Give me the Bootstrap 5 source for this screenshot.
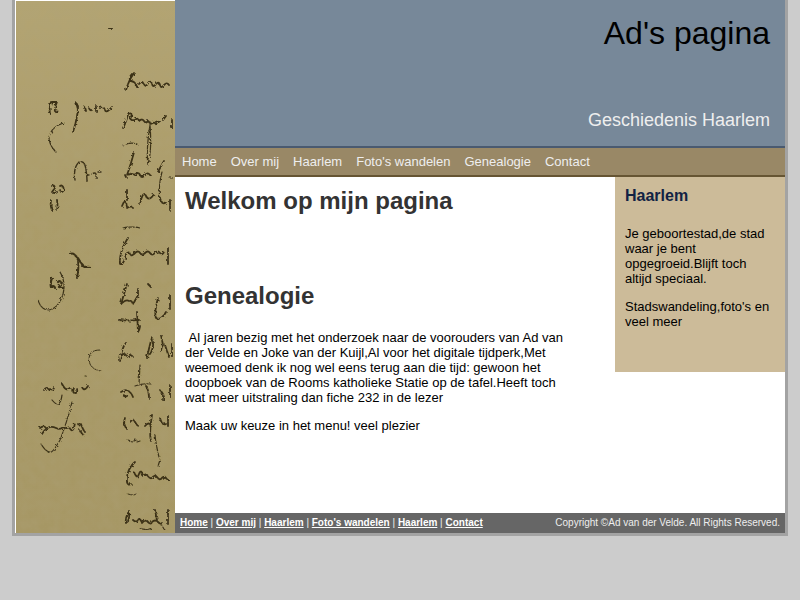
<!DOCTYPE html>
<html lang="nl">
<head>
  <meta charset="UTF-8">
  <title>Ad's pagina</title>
  <link href="https://cdn.jsdelivr.net/npm/bootstrap@5.3.0/dist/css/bootstrap.min.css" rel="stylesheet">
  <style>
    body {
      background-color: #cccccc;
      color: #000;
      font-family: "Liberation Sans", Arial, sans-serif;
      font-size: 13px;
      line-height: 15px;
    }
    #wrap {
      width: 776px;
      height: 536px;
      margin-left: 12px;
      border: 3px solid #a3a3a3;
      border-top: 0;
      background-color: #fff;
    }
    #scan {
      width: 160px;
      flex: none;
      padding: 1px 0 0 1px;
      background-color: #fff;
    }
    #scan svg { display: block; }
    #kop {
      height: 148px;
      background-color: #778899;
      border-bottom: 2px solid #4a5a70;
      padding: 15px 15px 0 0;
      text-align: right;
    }
    #kop h1 {
      font-size: 32px;
      line-height: 37px;
      margin: 0 0 58px;
      color: #000;
      font-weight: 400;
    }
    #kop h2 {
      font-size: 18px;
      line-height: 21px;
      margin: 0;
      color: #eee;
      font-weight: 400;
    }
    #menu {
      height: 29px;
      background-color: #998866;
      border-bottom: 2px solid #665533;
      padding: 6px 7px 0;
      gap: 14px;
    }
    #menu a {
      color: #eee;
      text-decoration: none;
      font-size: 13px;
      line-height: 15px;
    }
    #tekst {
      width: 440px;
      flex: none;
      padding: 10px 0 0 10px;
      height: 336px;
    }
    #tekst h2 {
      color: #333;
      font-size: 24px;
      line-height: 28px;
      font-weight: 700;
      margin: 0;
    }
    #tekst h2.tweede { margin: 67px 0 20px; }
    #tekst p { width: 380px; margin: 0 0 13px; }
    #zij {
      width: 170px;
      height: 195px;
      flex: none;
      background-color: #ccbb99;
      padding: 10px;
    }
    #zij h3 {
      color: #112244;
      font-size: 16px;
      line-height: 18px;
      font-weight: 700;
      margin: 0 0 21px;
    }
    #zij p { margin: 0 0 13px; }
    #voet {
      height: 20px;
      background-color: #666;
      color: #eee;
      font-size: 10px;
      line-height: 13px;
      padding: 3px 5px 0;
    }
    #voet a { color: #fff; font-weight: 700; text-decoration: underline; }
  </style>
</head>
<body>
  <div id="wrap" class="d-flex">
    <div id="scan">
      <svg width="159" height="532" viewBox="16 1 159 532" fill="none" stroke="#3c3218" stroke-linecap="round" stroke-linejoin="round">
        <defs>
          <filter id="korrel" x="0" y="0" width="100%" height="100%">
            <feTurbulence type="fractalNoise" baseFrequency="0.1" numOctaves="3" seed="4"/>
            <feColorMatrix values="0 0 0 0 0.42  0 0 0 0 0.36  0 0 0 0 0.2  0 0 0 0.45 -0.1"/>
          </filter>
          <filter id="zacht" x="0" y="0" width="100%" height="100%">
            <feTurbulence type="fractalNoise" baseFrequency="0.35" numOctaves="2" seed="9" result="ruis"/>
            <feDisplacementMap in="SourceGraphic" in2="ruis" scale="3.5"/>
            <feGaussianBlur stdDeviation="0.7"/>
          </filter>
          <linearGradient id="papier" x1="0" y1="0" x2="0" y2="1">
            <stop offset="0" stop-color="#b3a472"/>
            <stop offset="0.4" stop-color="#ab9c69"/>
            <stop offset="1" stop-color="#a69764"/>
          </linearGradient>
        </defs>
        <rect x="16" y="1" width="159" height="532" fill="url(#papier)" stroke="none"/>
        <rect x="16" y="1" width="159" height="532" filter="url(#korrel)" stroke="none"/>
        <g filter="url(#zacht)" stroke-width="1.8" stroke-dasharray="5 1.2">
          <path d="M110 28h1" stroke-width="4"/>
          <!-- rechterkolom -->
          <path d="M126 90q3-10 8-17M132 74q-4 4-1 7q5 1 6 6M139 84q3-4 5 0t4-1q3-3 4 1t4 0q3-3 4 1t4 0q3-3 5 0"/>
          <path d="M123 128q4-8 5-14q5-2 3 3q-2 4 4 3q3-3 4 1q3-3 5 0t4 0l3 3q3-2 4-1t5-2M163 120l3-4M172 120v8"/>
          <path d="M150 125q-4 25-2 40q4-15 2-40M123 145q8-3 14-1" stroke-width="1.2"/>
          <path d="M134 152q-3 12-7 23q5-2 8 0q3-4 5 0t5 0q3-3 5 0M158 172q4-8 6-11M125 175l1 2"/>
          <path d="M162 172q-4 15-2 28M170 178h3" stroke-width="1.2"/>
          <path d="M127 190v10M122 206q4-10 5 2q4-3 6 0M140 204q3-14 6-8q3 6 8-2M160 198q2 8 6 4M170 200v10"/>
          <path d="M123 228q8-2 17 0" stroke-width="1.2"/>
          <path d="M128 238q-9 14-8 26q4 1 6-10q3-3 4 0t5-1q3-3 5 0t5 0q3-3 5 0t5 0q3-3 5 0t4-1M168 248v16"/>
          <path d="M127 284q-3 10-6 20q5-5 8-3q3-1 4 3q3-5 5-9v-6M148 284l3 3M158 298q-4 15-2 20q5 3 10-6M170 295v14"/>
          <path d="M119 320q10 1 20 0M137 312l1 20q2-3 2-6"/>
          <path d="M120 361q2-14 6-18M122 355q3-3 5 2q3-4 6 0M147 358q3-15 5-20q3 8-2 16M161 335l2 10q-2 4-2 6M165 345l4 12M172 345v12"/>
          <path d="M140 365l-1 19M135 386q8-3 16-2" stroke-width="1.2"/>
          <path d="M121 392q5-3 7-1q3 1 5 6M123 395q2 3 5 0M146 386q3 5 3 12M160 390q4 5 3 10M170 386v12"/>
          <path d="M125 418q-2 5 1 10M130 422q3-4 5 0t4 4M145 426q4-5 6 0M152 415q-3 18-1 26M160 418q2 8 6 6M168 416v10"/>
          <path d="M128 440q5 2 8 0M137 442l3-1" stroke-width="1.2"/>
          <path d="M155 435q1 10 4 22M160 460l-2 6" stroke-width="1.2"/>
          <path d="M135 462q-9 8-8 20q1 4 4 2M134 472q3 8 5 2t4 2q3-3 5 0t4 2q3-4 5-1t4 2q3-4 5-1t4 2"/>
          <path d="M128 494q6 2 8 0" stroke-width="1"/>
          <path d="M128 513q-3 6-2 10q4-2 3-12M133 520q3 3 5 0t4 3q3-4 6-1t4 0q3-3 6 0t4 1M155 510l2 10M168 510v14"/>
          <path d="M140 528q6 3 12 0M162 526l3 4" stroke-width="1.2"/>
          <!-- linkerkolom -->
          <path d="M51 102q-2 6-1 12M52 102h5l-2 5M55 109q-1 4 3 2"/>
          <path d="M76 103q2 5 2 9M78 106q0 10-5 26M84 108q1-2 2 3M89 108q1 3 3 2M96 106v6M100 108q4-2 5 2t7-3"/>
          <path d="M64 123q-12 3-15 14q0 8 7 15" stroke-width="1.2"/>
          <path d="M75 180q-2-12 4-18q6-2 7 8q1 6 1 12M88 175h1M92 174q3-2 4 0v4M98 172h3" stroke-width="1.4"/>
          <path d="M52 186q2-2 3 2l-3 4q3 2 5 0M60 186q3-2 4 4q-3 4-4 0"/>
          <path d="M51 200q-1 6 1 10M57 200q1 6 0 10"/>
          <path d="M70 254q5-2 8 6q1 8-1 18M78 258q3 5 6 9h6M82 266l8 1" stroke-width="2"/>
          <path d="M52 278q-2 5-1 9q3-2 4 1M58 282q2-2 4 1l-3 4q3 1 4 1" stroke-width="2.2"/>
          <path d="M60 272q6 10 3 22q-4 14-14 16q-8 0-11-10" stroke-width="1.2"/>
          <path d="M100 350q-14 0-10 14q3 6 11 7M85 376h1" stroke-width="1"/>
          <path d="M44 390q3-4 5 0M50 389q4 2 4-2M62 384q4 8 8 4M74 388q-2 5 1 5t2-4M82 387q2 5 6-1"/>
          <path d="M52 400q8 10 10-5" stroke-width="1.2"/>
          <path d="M72 402q-5 20-12 38q-8 14-10 12q-4 0-9-8" stroke-width="1.1"/>
          <path d="M40 428q4-3 6 0M42 434q6-10 14-6q4 2 7-1q4 2 6 0q4 8 6-4M78 424q2 3 3 0q2 6 4 8M80 430q3 6 3 4"/>
        </g>
      </svg>
    </div>
    <div class="flex-grow-1 d-flex flex-column">
      <div id="kop">
        <h1>Ad's pagina</h1>
        <h2>Geschiedenis Haarlem</h2>
      </div>
      <div id="menu" class="d-flex">
        <a href="#">Home</a>
        <a href="#">Over mij</a>
        <a href="#">Haarlem</a>
        <a href="#">Foto's wandelen</a>
        <a href="#">Genealogie</a>
        <a href="#">Contact</a>
      </div>
      <div class="d-flex justify-content-between">
        <div id="tekst">
          <h2>Welkom op mijn pagina</h2>
          <h2 class="tweede">Genealogie</h2>
          <p>&nbsp;Al jaren bezig met het onderzoek naar de voorouders van Ad van der Velde en Joke van der Kuijl,Al voor het digitale tijdperk,Met weemoed denk ik nog wel eens terug aan die tijd: gewoon het doopboek van de Rooms katholieke Statie op de tafel.Heeft toch wat meer uitstraling dan fiche 232 in de lezer</p>
          <p>Maak uw keuze in het menu! veel plezier</p>
        </div>
        <div id="zij">
          <h3>Haarlem</h3>
          <p>Je geboortestad,de stad waar je bent opgegroeid.Blijft toch altijd speciaal.</p>
          <p>Stadswandeling,foto's en veel meer</p>
        </div>
      </div>
      <div id="voet" class="d-flex justify-content-between">
        <span><a href="#">Home</a> | <a href="#">Over mij</a> | <a href="#">Haarlem</a> | <a href="#">Foto's wandelen</a> | <a href="#">Haarlem</a> | <a href="#">Contact</a></span>
        <span>Copyright ©Ad van der Velde. All Rights Reserved.</span>
      </div>
    </div>
  </div>
  <script src="https://cdn.jsdelivr.net/npm/bootstrap@5.3.0/dist/js/bootstrap.bundle.min.js"></script>
</body>
</html>
